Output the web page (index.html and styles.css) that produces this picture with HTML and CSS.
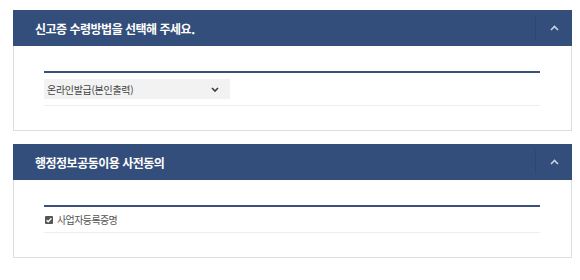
FILE: index.html
```html
<!DOCTYPE html>
<html lang="ko">
<head>
<meta charset="utf-8">
<link rel="stylesheet" href="styles.css">
</head>
<body>
  <section class="panel">
    <div class="panel-head">
      <h2 class="panel-title">신고증 수령방법을 선택해 주세요.</h2>
      <button class="toggle" type="button" aria-label="접기">
        <svg width="9" height="6" viewBox="0 0 9 6"><path d="M1 5 L4.5 1.5 L8 5" fill="none" stroke="#c9d1e0" stroke-width="1.6"/></svg>
      </button>
    </div>
    <div class="panel-body">
      <div class="field-table">
        <div class="field-row row-select">
          <div class="select-wrap">
            <select class="select">
              <option>온라인발급(본인출력)</option>
            </select>
            <svg class="select-arrow" width="8" height="5" viewBox="0 0 8 5"><path d="M1 1 L4 4 L7 1" fill="none" stroke="#3a3a3a" stroke-width="1.6"/></svg>
          </div>
        </div>
      </div>
    </div>
  </section>

  <section class="panel">
    <div class="panel-head">
      <h2 class="panel-title">행정정보공동이용 사전동의</h2>
      <button class="toggle" type="button" aria-label="접기">
        <svg width="9" height="6" viewBox="0 0 9 6"><path d="M1 5 L4.5 1.5 L8 5" fill="none" stroke="#c9d1e0" stroke-width="1.6"/></svg>
      </button>
    </div>
    <div class="panel-body">
      <div class="field-table">
        <div class="field-row row-check">
          <label class="check">
            <span class="check-box"><svg width="8" height="8" viewBox="0 0 8 8"><path d="M1.6 4.2 L3.2 5.8 L6.4 2.2" fill="none" stroke="#fff" stroke-width="1.3"/></svg></span>
            <span class="check-label">사업자등록증명</span>
          </label>
        </div>
      </div>
    </div>
  </section>
</body>
</html>
```

FILE: styles.css
```css
* { box-sizing: border-box; }

body {
  margin: 0;
  padding: 10px 8px 0 13px;
  background: #fff;
  font-family: "Noto Sans CJK KR", "Noto Sans", sans-serif;
}

.panel {
  margin-bottom: 13px;
}

.panel-head {
  display: flex;
  align-items: stretch;
  height: 36px;
  background: #344e7b;
}

.panel-title {
  flex: 1;
  margin: 0;
  padding-left: 22px;
  display: flex;
  align-items: center;
  font-size: 12px;
  font-weight: 700;
  letter-spacing: -0.5px;
  color: #fff;
}

.toggle {
  width: 37px;
  margin: 6px 0;
  padding: 0;
  border: 0;
  border-left: 1px solid #2e4670;
  background: transparent;
  display: flex;
  align-items: center;
  justify-content: center;
}

.panel-body {
  border: 1px solid #dddddd;
  border-top: 0;
  padding: 25px 31px 24px 30px;
}

.field-table {
  border-top: 2px solid #3b5079;
}

.field-row {
  border-bottom: 1px solid #eeeeee;
}

.row-select {
  padding: 6px 0;
}

.select-wrap {
  position: relative;
  width: 186px;
  height: 20px;
}

.select {
  display: block;
  appearance: none;
  -webkit-appearance: none;
  width: 100%;
  height: 20px;
  margin: 0;
  padding: 0 0 0 3px;
  border: 0;
  border-radius: 0;
  background: #f2f2f2;
  font-family: "Noto Sans CJK KR", sans-serif;
  font-size: 10px;
  letter-spacing: -0.3px;
  color: #444;
}

.select-arrow {
  position: absolute;
  right: 11px;
  top: 8px;
}

.row-check {
  height: 26px;
  display: flex;
  align-items: center;
}

.check {
  display: flex;
  align-items: center;
  gap: 4px;
  padding-left: 1px;
}

.check-box {
  width: 8px;
  height: 8px;
  background: #555;
  border-radius: 1px;
  display: flex;
}

.check-label {
  font-size: 10px;
  letter-spacing: -0.6px;
  color: #555;
}
```
